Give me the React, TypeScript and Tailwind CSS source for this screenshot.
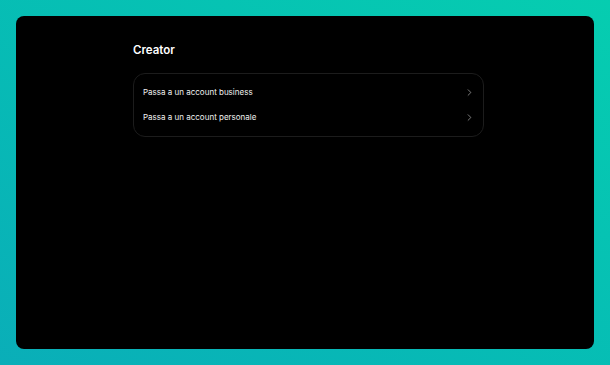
import { ChevronRight } from "lucide-react";

const rows = ["Passa a un account business", "Passa a un account personale"];

const App = () => {
  return (
    <div className="w-[610px] h-[365px] p-4 bg-gradient-to-tr from-[#0aaeb8] to-[#06cdb0] font-['Inter',sans-serif]">
      <div className="h-full w-full rounded-lg bg-black pt-[29px]">
        <div className="ml-[117px] w-[351px]">
          <h1 className="text-[11.5px] font-semibold text-white leading-none">Creator</h1>
          <div className="mt-[16px] rounded-xl border border-[#1c1c1c] py-[6px]">
            {rows.map((row) => (
              <div key={row} className="flex items-center justify-between h-[25px] pl-[9px] pr-[8px]">
                <span className="text-[8px] text-[#f0f0f0]">{row}</span>
                <ChevronRight size={11} strokeWidth={1.5} className="text-[#b0b0b0]" />
              </div>
            ))}
          </div>
        </div>
      </div>
    </div>
  );
};

export default App;
